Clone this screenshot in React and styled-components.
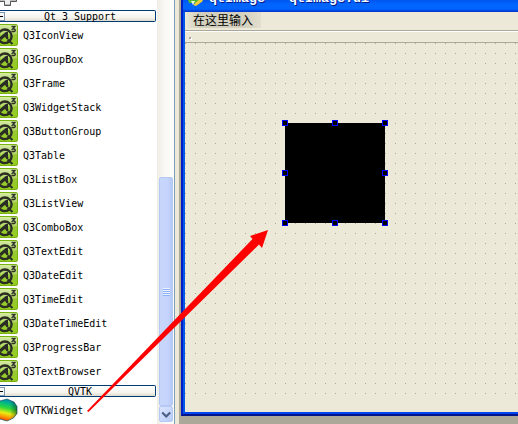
import React from "react";
import styled, { createGlobalStyle } from "styled-components";

const Global = createGlobalStyle`
  body { margin: 0; overflow: hidden; background: #aca899; }
  * { box-sizing: border-box; }
`;

const Screen = styled.div`
  position: relative;
  display: flex;
  width: 518px;
  height: 424px;
  overflow: hidden;
  background: #aca899;
`;

const WidgetBox = styled.aside`
  display: flex;
  flex-direction: column;
  width: 157px;
  height: 424px;
  overflow: hidden;
  background: #fff;
`;

const PreviousRow = styled.div`
  height: 10px;
  flex: none;
  svg { display: block; }
`;

const Category = styled.div`
  display: flex;
  align-items: center;
  flex: none;
  width: 156px;
  height: 12px;
  margin-top: ${(p) => p.$before || 0}px;
  margin-bottom: 1px;
  border: solid #003c74;
  border-width: 1px 1px 1px 0;
  border-radius: 0 2px 2px 0;
  background: linear-gradient(#fff, #f5f4ee 65%, #dedacb);
`;

const Collapse = styled.span`
  display: flex;
  align-items: center;
  width: 5px;
  height: 9px;
  border: solid #7898b5;
  border-width: 1px 1px 1px 0;
  background: #f8f7f2;
  &::before { content: ""; width: 3px; height: 1px; background: #000; }
`;

const Label = styled.span`
  padding-top: 1px;
  font: 10px/12px "DejaVu Sans Mono", monospace;
  color: #000;
  white-space: pre;
  transform: scaleY(1.12);
`;

const CategoryTitle = styled(Label)`
  flex: 1;
  text-align: center;
`;

const Item = styled.div`
  display: flex;
  align-items: center;
  flex: none;
  height: 24px;
  svg { display: block; flex: none; width: 23px; height: 24px; }
`;

const ScrollBar = styled.div`
  display: flex;
  flex-direction: column;
  width: 17px;
  padding: 177px 1px 0 2px;
  background: linear-gradient(90deg, #eeede5, #f8f7f3 40%, #fefefb);
`;

const Thumb = styled.div`
  display: flex;
  align-items: center;
  justify-content: center;
  height: 229px;
  width: 14px;
  border: 1px solid #b5c8f5;
  border-radius: 2px;
  background: linear-gradient(90deg, #c8d6fb, #c4d4fc 65%, #b5c8f4);
`;

const Grip = styled.div`
  width: 7px;
  height: 8px;
  background: repeating-linear-gradient(#eef4fe 0 1px, #8cb0f8 1px 2px);
`;

const ScrollDown = styled.div`
  width: 14px;
  height: 16px;
  border: 1px solid #b5c8f5;
  border-radius: 2px;
  background: linear-gradient(135deg, #dce6ff, #b8cbf6);
  svg { display: block; }
`;

const Splitter = styled.div`
  width: 7px;
  height: 424px;
  background: linear-gradient(90deg, #7f9db9 0 1px, #ece9d8 1px 5px, #aca899 5px 7px);
`;

const FormWindow = styled.section`
  display: flex;
  flex-direction: column;
  flex: 1;
  height: 416px;
  border-left: 2px solid #0020c4;
  border-bottom: 2px solid #001587;
`;

const TitleBar = styled.header`
  display: flex;
  flex: none;
  height: 12px;
  padding-left: 5px;
  overflow: hidden;
  background: linear-gradient(#0055ec, #0064ff 35%, #0065ff 75%, #003fd8 92%, #0039c6);
  svg { flex: none; }
`;

const WindowTitle = styled.span`
  margin: -9px 0 0 4px;
  font: bold 13.33px/16px "Liberation Mono", monospace;
  color: #fff;
  white-space: pre;
  text-shadow: 1px 1px #0a1883;
`;

const ClientArea = styled.div`
  display: flex;
  flex-direction: column;
  flex: 1;
  border-left: 2px solid #0057e8;
  border-bottom: 2px solid #0045f0;
  background: #ece9d8;
`;

const MenuBar = styled.nav`
  display: flex;
  height: 18px;
  align-items: flex-start;
`;

const MenuPrompt = styled.span`
  width: 76px;
  height: 16px;
  padding-left: 8px;
  font: 12px/16px "Noto Sans CJK SC", sans-serif;
  color: #000;
  white-space: nowrap;
  background: linear-gradient(90deg, #ece9d8, #d2cfbf 18%, #d4d1c1 80%, #e2dfcf);
`;

const ToolBar = styled.div`
  display: flex;
  align-items: flex-start;
  height: 13px;
  padding: 6px 0 0 4px;
  border-top: 1px solid #aca899;
  border-bottom: 1px solid #aca899;
  box-shadow: inset 0 1px #fff;
  &::before { content: ""; width: 2px; height: 2px; background: #aca899; box-shadow: 1px 1px #fff; }
`;

const FormCanvas = styled.main`
  position: relative;
  height: 351px;
  background: conic-gradient(from 270deg at 1px 1px, #aca899 90deg, transparent 0) 0 0 / 10px 10px;
`;

const VtkView = styled.div`
  position: absolute;
  left: 100px;
  top: 80px;
  width: 100px;
  height: 100px;
  background: #000;
`;

const Handle = styled.i`
  position: absolute;
  left: ${(p) => p.$x - 3}px;
  top: ${(p) => p.$y - 3}px;
  width: 6px;
  height: 6px;
  border: 1px solid #0000ff;
  background: #000;
`;

const ArrowOverlay = styled.svg`
  position: absolute;
  inset: 0;
  pointer-events: none;
`;

const items = [
  "Q3IconView", "Q3GroupBox", "Q3Frame", "Q3WidgetStack", "Q3ButtonGroup",
  "Q3Table", "Q3ListBox", "Q3ListView", "Q3ComboBox", "Q3TextEdit",
  "Q3DateEdit", "Q3TimeEdit", "Q3DateTimeEdit", "Q3ProgressBar", "Q3TextBrowser",
];

const handles = [[0, 0], [50, 0], [100, 0], [0, 50], [100, 50], [0, 100], [50, 100], [100, 100]];

function Qt3Icon() {
  return (
    <svg viewBox="0 0 23 24">
      <defs>
        <linearGradient id="green" x2="0" y2="1">
          <stop stopColor="#d9ebaa" />
          <stop offset=".45" stopColor="#b3d663" />
          <stop offset=".5" stopColor="#98c936" />
          <stop offset="1" stopColor="#94cc20" />
        </linearGradient>
      </defs>
      <rect x="-4" y="1.5" width="21.5" height="21" rx="1.5" fill="url(#green)" stroke="#78b40c" />
      <circle cx="4.8" cy="13.3" r="6.8" fill="none" stroke="#292d24" strokeWidth="2.4" />
      <path d="m0 16 7-6" fill="none" stroke="#292d24" strokeWidth="3" />
      <path d="M7 9v7M4 12l4 3.5M7.5 16.5l5 4.5" fill="none" stroke="#292d24" strokeWidth="2" />
      <path d="M11.5 3.5h3.3L12.7 6q2.5-.4 2.5 1.3 0 1.8-3.8 1" fill="none" stroke="#30352a" strokeWidth="1.5" />
    </svg>
  );
}

function VtkIcon() {
  return (
    <svg viewBox="0 0 23 24">
      <defs>
        <linearGradient id="spectrum" x1=".6" x2=".4" y2="1">
          <stop stopColor="#087cba" />
          <stop offset=".2" stopColor="#00b889" />
          <stop offset=".42" stopColor="#2fd83b" />
          <stop offset=".65" stopColor="#e9ed12" />
          <stop offset=".85" stopColor="#ff8a00" />
          <stop offset="1" stopColor="#e93700" />
        </linearGradient>
        <linearGradient id="edge">
          <stop stopOpacity="0" offset=".65" />
          <stop stopOpacity=".4" offset="1" />
        </linearGradient>
      </defs>
      <path d="m7 1 7 3 3 4.5v7L13.5 20 7 23l-7-2-3-5V8l3-5z" fill="url(#spectrum)" stroke="#1b5960" strokeWidth=".7" />
      <path d="m7 1 7 3 3 4.5v7L13.5 20 7 23l-7-2-3-5V8l3-5z" fill="url(#edge)" />
    </svg>
  );
}

export default function App() {
  return (
    <>
      <Global />
      <Screen>
        <WidgetBox>
          <PreviousRow>
            <svg width="18" height="10" viewBox="0 0 18 10">
              <path d="M-1-1V1.5H4.5V5.5H10.500V1.5H16.5V-1z" fill="#bcbcbc" stroke="#555" />
              <path d="M5 0h5v4H5z" fill="#eee" />
            </svg>
          </PreviousRow>
          <Category>
            <Collapse />
            <CategoryTitle>Qt 3 Support</CategoryTitle>
          </Category>
          {items.map((name) => (
            <Item key={name}><Qt3Icon /><Label>{name}</Label></Item>
          ))}
          <Category $before={2}>
            <Collapse />
            <CategoryTitle>QVTK</CategoryTitle>
          </Category>
          <Item><VtkIcon /><Label>QVTKWidget</Label></Item>
        </WidgetBox>
        <ScrollBar>
          <Thumb><Grip /></Thumb>
          <ScrollDown>
            <svg width="12" height="14" viewBox="0 0 12 14">
              <path d="m2.2 5.5 4 4 4-4" fill="none" stroke="#4d6185" strokeWidth="2.2" />
            </svg>
          </ScrollDown>
        </ScrollBar>
        <Splitter />
        <FormWindow>
          <TitleBar>
            <svg width="17" height="8" viewBox="0 0 17 8">
              <path d="M0 0h12l-3 3H1z" fill="#52b934" />
              <path d="m5 5 8-7 2 3-7 5z" fill="#f5cc35" />
              <path d="m3 1 4 0-2 4z" fill="#eef7d9" />
            </svg>
            <WindowTitle>qtImage - qtImage.ui*</WindowTitle>
          </TitleBar>
          <ClientArea>
            <MenuBar><MenuPrompt>在这里输入</MenuPrompt></MenuBar>
            <ToolBar />
            <FormCanvas>
              <VtkView>
                {handles.map(([x, y]) => <Handle key={`${x}-${y}`} $x={x} $y={y} />)}
              </VtkView>
            </FormCanvas>
          </ClientArea>
        </FormWindow>
        <ArrowOverlay width="518" height="424" viewBox="0 0 518 424">
          <path d="M87 411 252.500 239 250 236 268 230 262 248 259 244.500 88.500 412z" fill="#fe0000" />
        </ArrowOverlay>
      </Screen>
    </>
  );
}
